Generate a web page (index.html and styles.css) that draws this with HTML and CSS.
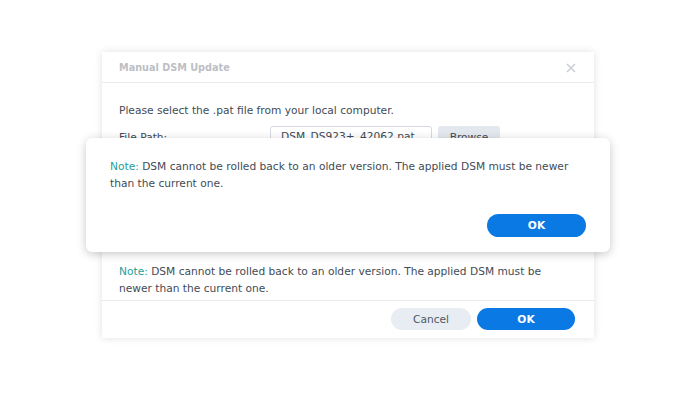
FILE: index.html
```html
<!DOCTYPE html>
<html>
<head>
<meta charset="utf-8">
<link rel="stylesheet" href="styles.css">
</head>
<body>
<div class="window">
  <div class="win-head">
    <span class="win-title">Manual DSM Update</span>
    <svg class="close" width="10" height="10" viewBox="0 0 10 10"><path d="M1 1L9 9M9 1L1 9" stroke="#c5c9ce" stroke-width="1.3" fill="none"/></svg>
  </div>
  <div class="win-body">
    <p class="lead">Please select the .pat file from your local computer.</p>
    <div class="row">
      <span class="label">File Path:</span>
      <div class="input">DSM_DS923+_42062.pat</div>
      <button class="btn-browse">Browse</button>
    </div>
    <div class="spacer"></div>
    <p class="note"><span class="note-key">Note:</span><span> DSM cannot be rolled back to an older version. The applied DSM must be</span><br><span>newer than the current one.</span></p>
  </div>
  <div class="win-foot">
    <button class="btn btn-cancel">Cancel</button>
    <button class="btn btn-ok">OK</button>
  </div>
</div>

<div class="alert">
  <p class="alert-text"><span class="note-key">Note:</span><span> DSM cannot be rolled back to an older version. The applied DSM must be newer</span><br><span>than the current one.</span></p>
  <div class="alert-foot">
    <button class="btn btn-ok btn-wide">OK</button>
  </div>
</div>
</body>
</html>
```

FILE: styles.css
```css
html, body {
  margin: 0;
  padding: 0;
  background: #ffffff;
  width: 690px;
  height: 409px;
  overflow: hidden;
  font-family: "DejaVu Sans", Verdana, sans-serif;
  font-size: 10.65px;
  color: #414b55;
}
p { margin: 0; }

.window {
  position: absolute;
  left: 102px;
  top: 52px;
  width: 492px;
  height: 286px;
  background: #fff;
  box-shadow: 0 0 8px rgba(0,0,0,0.12);
  display: flex;
  flex-direction: column;
}
.win-head {
  height: 31px;
  border-bottom: 1px solid #e9ebee;
  display: flex;
  align-items: center;
  justify-content: space-between;
  padding: 1px 18px 0 17px;
  box-sizing: border-box;
}
.win-title {
  font-weight: bold;
  font-size: 9.7px;
  color: #bcc0c5;
}
.win-body {
  flex: 1;
  padding: 0 17px;
  display: flex;
  flex-direction: column;
}
.lead {
  margin-top: 21px;
  line-height: 13px;
}
.row {
  margin-top: 9px;
  display: flex;
  align-items: center;
  height: 22px;
}
.label { width: 151px; }
.input {
  width: 162px;
  height: 22px;
  box-sizing: border-box;
  border: 1px solid #d5dae0;
  border-radius: 3px;
  padding: 0 10px;
  line-height: 20px;
  color: #414b55;
  white-space: nowrap;
  overflow: hidden;
}
.btn-browse {
  margin-left: 6px;
  width: 62px;
  height: 22px;
  border: none;
  border-radius: 3px;
  background: #e3e8ef;
  font: inherit;
  color: #414b55;
}
.spacer { flex: 1; }
.note {
  line-height: 17px;
  margin-bottom: 3px;
  white-space: nowrap;
}
.note-key { color: #1ea09b; }
.win-foot {
  border-top: 1px solid #e9ebee;
  height: 38px;
  box-sizing: border-box;
  display: flex;
  justify-content: flex-end;
  align-items: flex-start;
  padding: 7px 19px 0 0;
  gap: 6px;
}
.btn {
  height: 22px;
  border: none;
  border-radius: 11px;
  font: inherit;
  font-size: 10.65px;
}
.btn-cancel {
  width: 80px;
  background: #e8edf3;
  color: #4f5964;
}
.btn-ok {
  width: 98px;
  background: #0a79e3;
  color: #fff;
  font-weight: bold;
}
.btn-wide { width: 99px; height: 23px; border-radius: 12px; }

.alert {
  position: absolute;
  left: 86px;
  top: 138px;
  width: 524px;
  height: 114px;
  box-sizing: border-box;
  background: #fff;
  border-radius: 6px;
  box-shadow: 0 2px 10px rgba(0,0,0,0.22);
  padding: 20px 24px 15px 24px;
  display: flex;
  flex-direction: column;
}
.alert-text {
  line-height: 17px;
  white-space: nowrap;
}
.alert-foot {
  margin-top: auto;
  display: flex;
  justify-content: flex-end;
}
```
